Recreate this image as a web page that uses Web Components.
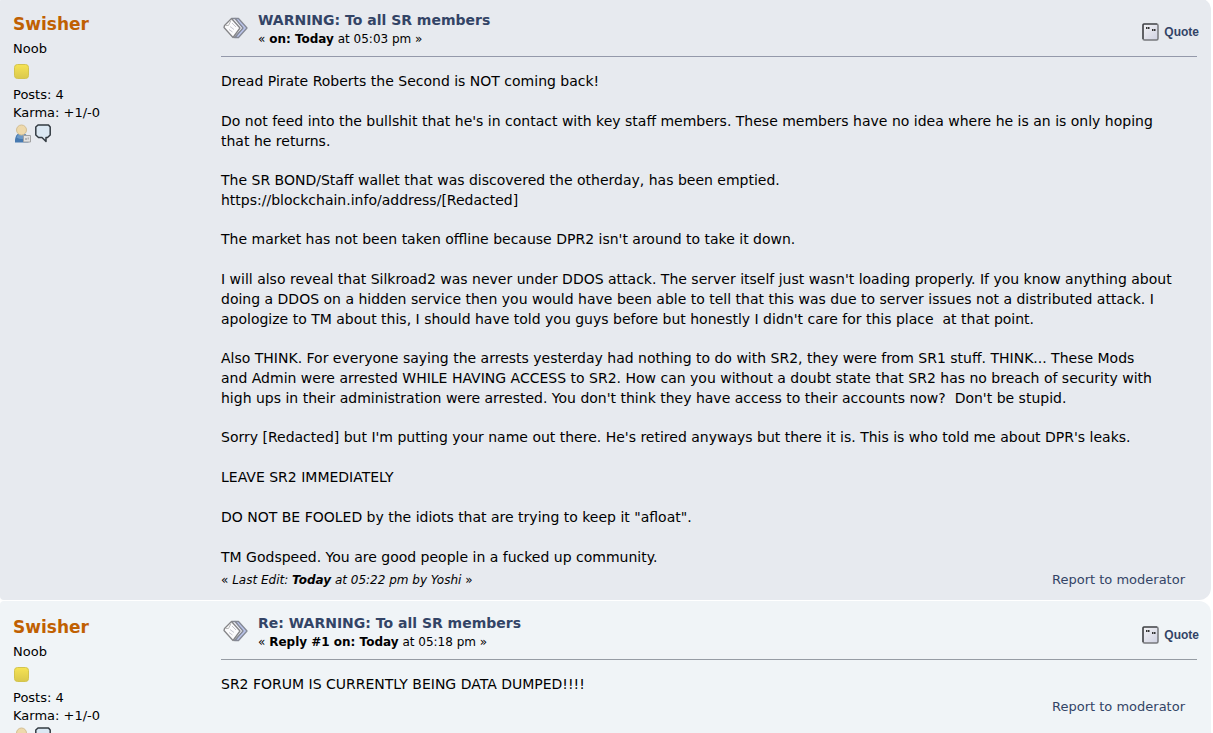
<!DOCTYPE html>
<html lang="en">
<head>
<meta charset="utf-8">
<title>WARNING: To all SR members</title>
<style>
  html { height: 100%; overflow: hidden; background: #fff; }
  body { margin: 0; height: 100%; overflow: hidden; color: #000; font: 13px/18px "DejaVu Sans", sans-serif; }
</style>
</head>
<body>
<forum-thread>
  <forum-post author="Swisher" rank="Noob" posts="4" karma="+1/-0" subject="WARNING: To all SR members">
    <span slot="when">« <b>on: Today</b> at 05:03 pm »</span>
    <p>Dread Pirate Roberts the Second is NOT coming back!</p>
    <p>Do not feed into the bullshit that he's in contact with key staff members. These members have no idea where he is an is only hoping<br>that he returns.</p>
    <p>The SR BOND/Staff wallet that was discovered the otherday, has been emptied.<br>https://blockchain.info/address/[Redacted]</p>
    <p>The market has not been taken offline because DPR2 isn't around to take it down.</p>
    <p>I will also reveal that Silkroad2 was never under DDOS attack. The server itself just wasn't loading properly. If you know anything about<br>doing a DDOS on a hidden service then you would have been able to tell that this was due to server issues not a distributed attack. I<br>apologize to TM about this, I should have told you guys before but honestly I didn't care for this place&nbsp; at that point.</p>
    <p>Also THINK. For everyone saying the arrests yesterday had nothing to do with SR2, they were from SR1 stuff. THINK... These Mods<br>and Admin were arrested WHILE HAVING ACCESS to SR2. How can you without a doubt state that SR2 has no breach of security with<br>high ups in their administration were arrested. You don't think they have access to their accounts now?&nbsp; Don't be stupid.</p>
    <p>Sorry [Redacted] but I'm putting your name out there. He's retired anyways but there it is. This is who told me about DPR's leaks.</p>
    <p>LEAVE SR2 IMMEDIATELY</p>
    <p>DO NOT BE FOOLED by the idiots that are trying to keep it "afloat".</p>
    <p>TM Godspeed. You are good people in a fucked up community.</p>
    <span slot="edited">« <i>Last Edit: <b>Today</b> at 05:22 pm by Yoshi</i> »</span>
  </forum-post>
  <forum-post alternate author="Swisher" rank="Noob" posts="4" karma="+1/-0" subject="Re: WARNING: To all SR members">
    <span slot="when">« <b>Reply #1 on: Today</b> at 05:18 pm »</span>
    <p>SR2 FORUM IS CURRENTLY BEING DATA DUMPED!!!!</p>
  </forum-post>
</forum-thread>

<template id="thread-template">
  <style>
    :host { display: flex; flex-direction: column; gap: 1px; margin: -2px 2px 0 0; }
  </style>
  <slot></slot>
</template>

<template id="author-template">
  <style>
    :host { display: block; width: 208px; flex: none; box-sizing: border-box; padding: 0 13px; }
    h4 { margin: 0 0 4px; font-size: 17px; line-height: 24px; }
    h4 a { color: #c06002; text-decoration: none; }
    ul { margin: 0; padding: 0; list-style: none; }
    svg { display: block; }
    .star { padding: 6px 0; }
    .icons { display: flex; gap: 3px; padding-top: 2px; }
    .icons a { display: block; }
  </style>
  <h4><a href="#profile"></a></h4>
  <ul>
    <li class="rank"></li>
    <li class="star">
      <svg width="17" height="16" viewBox="0 0 17 16" role="img" aria-label="Rank star">
        <defs><linearGradient id="g" x1="0" y1="0" x2="0" y2="1"><stop offset="0" stop-color="#f6e354"/><stop offset="1" stop-color="#dac84c"/></linearGradient></defs>
        <rect x="1.500" y=".5" width="14" height="14" rx="3" fill="url(#g)" stroke="#d3c44e"/>
      </svg>
    </li>
    <li class="posts"></li>
    <li class="karma"></li>
    <li class="icons">
      <a href="#profile" aria-label="View profile">
        <svg width="19" height="20" viewBox="0 0 19 20">
          <path d="M2 18.500v-3Q3 10 6 9.500h5q3.500 1 4.500 6v3z" fill="#4679b0"/>
          <path d="M3.500 13.500Q4 11 6 10.500h5q2 .5 2.500 3-4.500 3-10 0z" fill="#6b98c6"/>
          <circle cx="8.500" cy="6" r="5" fill="#eed9ab" stroke="#d3bf95"/>
          <path d="M10.500 11.500h7v6.500h-7z" fill="#e2e2e2" stroke="#a2a2a2"/>
          <path d="M12 14h2v2h-2zM14.500 13.500h1.500v2h-1.500z" fill="#b4b4b4"/>
        </svg>
      </a>
      <a href="#message" aria-label="Personal message">
        <svg width="16" height="20" viewBox="0 0 16 20">
          <path d="M3 1h10.500L15.200 3v8L12.500 13.500h-1.500v4l-4-4H3.500L.800 11V3z" fill="#dbe8f3" stroke="#333b42" stroke-width="1.500" stroke-linejoin="round"/>
        </svg>
      </a>
    </li>
  </ul>
</template>

<template id="post-template">
  <style>
    :host { display: flex; box-sizing: border-box; padding: 14px 14px 10px 0; border-radius: 4px 12px 12px 4px; background: #e7eaef; --rule: #9499aa; }
    :host([alternate]) { background: #f0f4f7; --rule: #969ca4; }
    .main { flex: 1; min-width: 0; margin-left: 13px; }
    header { display: flex; height: 44px; border-bottom: 1px solid var(--rule); }
    .icon { flex: none; width: 37px; padding: 4px 0 0 1px; box-sizing: border-box; }
    svg { display: block; }
    .title { flex: 1; }
    h5 { margin: 0; font-size: 14px; line-height: 17px; }
    a { color: #334466; text-decoration: none; }
    .when { font-size: 12px; line-height: 20px; }
    .quote { display: flex; align-items: center; gap: 5px; height: 20px; margin: 10px -2px 0 0; color: #334466; font: bold 12px/20px "Liberation Sans", sans-serif; }
    .body { display: grid; gap: 19px; padding-top: 14px; font-size: 14px; line-height: 20px; }
    ::slotted(p) { margin: 0; min-height: 21px; }
    footer { display: flex; justify-content: space-between; padding-right: 12px; margin-top: 2px; line-height: 20px; }
    .edited { font-size: 12px; }
  </style>
  <post-author></post-author>
  <div class="main">
    <header>
      <div class="icon">
        <svg width="26" height="26" viewBox="0 0 26 26" aria-hidden="true">
          <g stroke-linejoin="round" stroke-width="1.300">
            <path d="M13 2.500h3.500L25 12l-8.500 9.500H13L20.500 12z" fill="#b9c3ea" stroke="#858995"/>
            <path d="M10 2.500h3L21 12l-8.500 9.500L10.500 20z" fill="#f2f3fa" stroke="#858995"/>
            <path d="M9.500 2.500L18 12l-7 9.500L2 11.500l.5-2z" fill="#fbfbfc" stroke="#858588"/>
          </g>
          <path d="M3 9.500h3.500L9 4.500" fill="none" stroke="#bbb"/>
          <path d="M10 7l4 4M8 10.500l4 3M7 13.500l3.500 2.500" stroke="#c4c5cf"/>
        </svg>
      </div>
      <div class="title">
        <h5><a href="#post"></a></h5>
        <div class="when"><slot name="when"></slot></div>
      </div>
      <a class="quote" href="#quote">
        <svg width="17" height="18" viewBox="0 0 17 18" aria-hidden="true">
          <defs><linearGradient id="q" x1="0" y1="0" x2="1" y2="1"><stop offset="0" stop-color="#f4f4f6"/><stop offset="1" stop-color="#cfd1e2"/></linearGradient></defs>
          <rect x="1" y="1" width="15" height="16" rx="1.500" fill="url(#q)" stroke="#77787c" stroke-width="1.500"/>
          <path d="M1 16V2q0-1 1-1h13" fill="none" stroke="#3f4044" stroke-width="1.200"/>
          <path d="M4 4h1.500v2H4zM6 4h1.500v2H6zM10 6h1.500v2H10zM12 6h1.500v2H12z" fill="#333"/>
        </svg>
        <span>Quote</span>
      </a>
    </header>
    <div class="body"><slot></slot></div>
    <footer>
      <span class="edited"><slot name="edited"></slot></span>
      <a href="#report">Report to moderator</a>
    </footer>
  </div>
</template>

<script>
  const stamp = (host, id) => {
    const root = host.attachShadow({ mode: "open" });
    root.append(document.getElementById(id).content.cloneNode(true));
    return root;
  };

  customElements.define("forum-thread", class extends HTMLElement {
    constructor() { super(); stamp(this, "thread-template"); }
  });

  customElements.define("post-author", class extends HTMLElement {
    constructor() { super(); stamp(this, "author-template"); }
    show(post) {
      const put = (sel, text) => { this.shadowRoot.querySelector(sel).textContent = text; };
      put("h4 a", post.getAttribute("author"));
      put(".rank", post.getAttribute("rank"));
      put(".posts", "Posts: " + post.getAttribute("posts"));
      put(".karma", "Karma: " + post.getAttribute("karma"));
    }
  });

  customElements.define("forum-post", class extends HTMLElement {
    constructor() { super(); stamp(this, "post-template"); }
    connectedCallback() {
      const author = this.shadowRoot.querySelector("post-author");
      customElements.upgrade(author);
      author.show(this);
      this.shadowRoot.querySelector("h5 a").textContent = this.getAttribute("subject");
    }
  });
</script>
</body>
</html>
